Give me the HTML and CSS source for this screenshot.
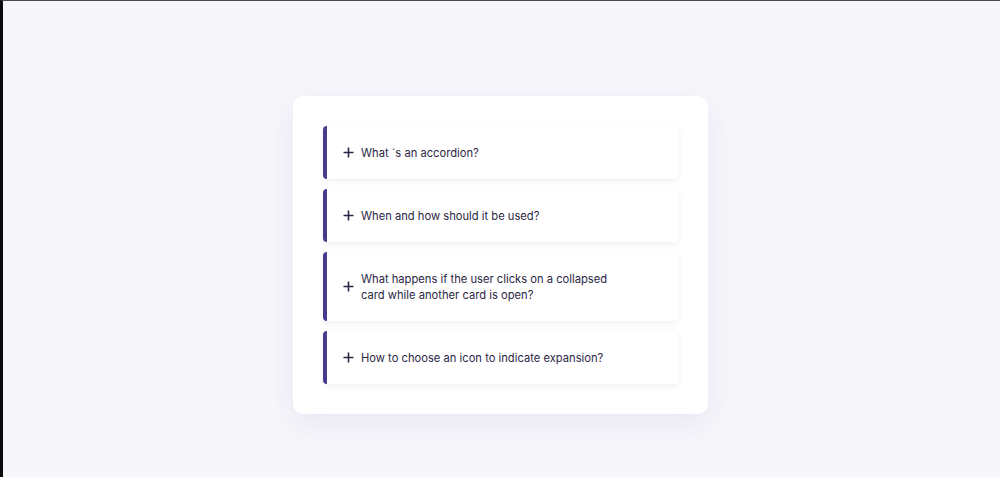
FILE: index.html
```html
<!DOCTYPE html>
<html lang="en">
<head>
<meta charset="utf-8">
<title>Accordion</title>
<link rel="stylesheet" href="styles.css">
</head>
<body>
<div class="frame">
  <main class="page">
    <section class="accordion">
      <div class="item">
        <span class="plus"><svg width="11" height="11" viewBox="0 0 11 11"><path d="M5.5 0.5v10M0.5 5.5h10" stroke="#2b2745" stroke-width="1.6" fill="none"/></svg></span>
        <span class="q">What ´s an accordion?</span>
      </div>
      <div class="item">
        <span class="plus"><svg width="11" height="11" viewBox="0 0 11 11"><path d="M5.5 0.5v10M0.5 5.5h10" stroke="#2b2745" stroke-width="1.6" fill="none"/></svg></span>
        <span class="q">When and how should it be used?</span>
      </div>
      <div class="item">
        <span class="plus"><svg width="11" height="11" viewBox="0 0 11 11"><path d="M5.5 0.5v10M0.5 5.5h10" stroke="#2b2745" stroke-width="1.6" fill="none"/></svg></span>
        <span class="q">What happens if the user clicks on a collapsed card while another card is open?</span>
      </div>
      <div class="item">
        <span class="plus"><svg width="11" height="11" viewBox="0 0 11 11"><path d="M5.5 0.5v10M0.5 5.5h10" stroke="#2b2745" stroke-width="1.6" fill="none"/></svg></span>
        <span class="q">How to choose an icon to indicate expansion?</span>
      </div>
    </section>
  </main>
</div>
</body>
</html>
```

FILE: styles.css
```css
html, body {
  margin: 0;
  padding: 0;
  height: 100%;
}
body {
  font-family: Inter, "Noto Sans", sans-serif;
  background: #f7f6fb;
}
.frame {
  box-sizing: border-box;
  height: 477px;
  border-top: 1px solid #4a4a4a;
  border-left: 3px solid #0c0c0c;
  background: #f7f6fb;
}
.page {
  display: flex;
  justify-content: center;
  padding-top: 95px;
  padding-right: 2px;
}
.accordion {
  box-sizing: border-box;
  width: 415px;
  padding: 30px;
  background: #fff;
  border-radius: 10px;
  box-shadow: 0 10px 30px rgba(60, 50, 120, 0.08);
  display: flex;
  flex-direction: column;
  gap: 10px;
}
.item {
  display: flex;
  align-items: center;
  gap: 7px;
  padding: 18.5px 16px;
  border-left: 4px solid #4a3a8e;
  border-radius: 4px;
  background: #fff;
  box-shadow: 0 2px 6px rgba(40, 30, 90, 0.07);
}
.plus {
  display: flex;
  width: 11px;
  height: 11px;
  flex: none;
}
.q {
  font-size: 11.2px;
  line-height: 16px;
  color: #2b2745;
  max-width: 252px;
}
```
